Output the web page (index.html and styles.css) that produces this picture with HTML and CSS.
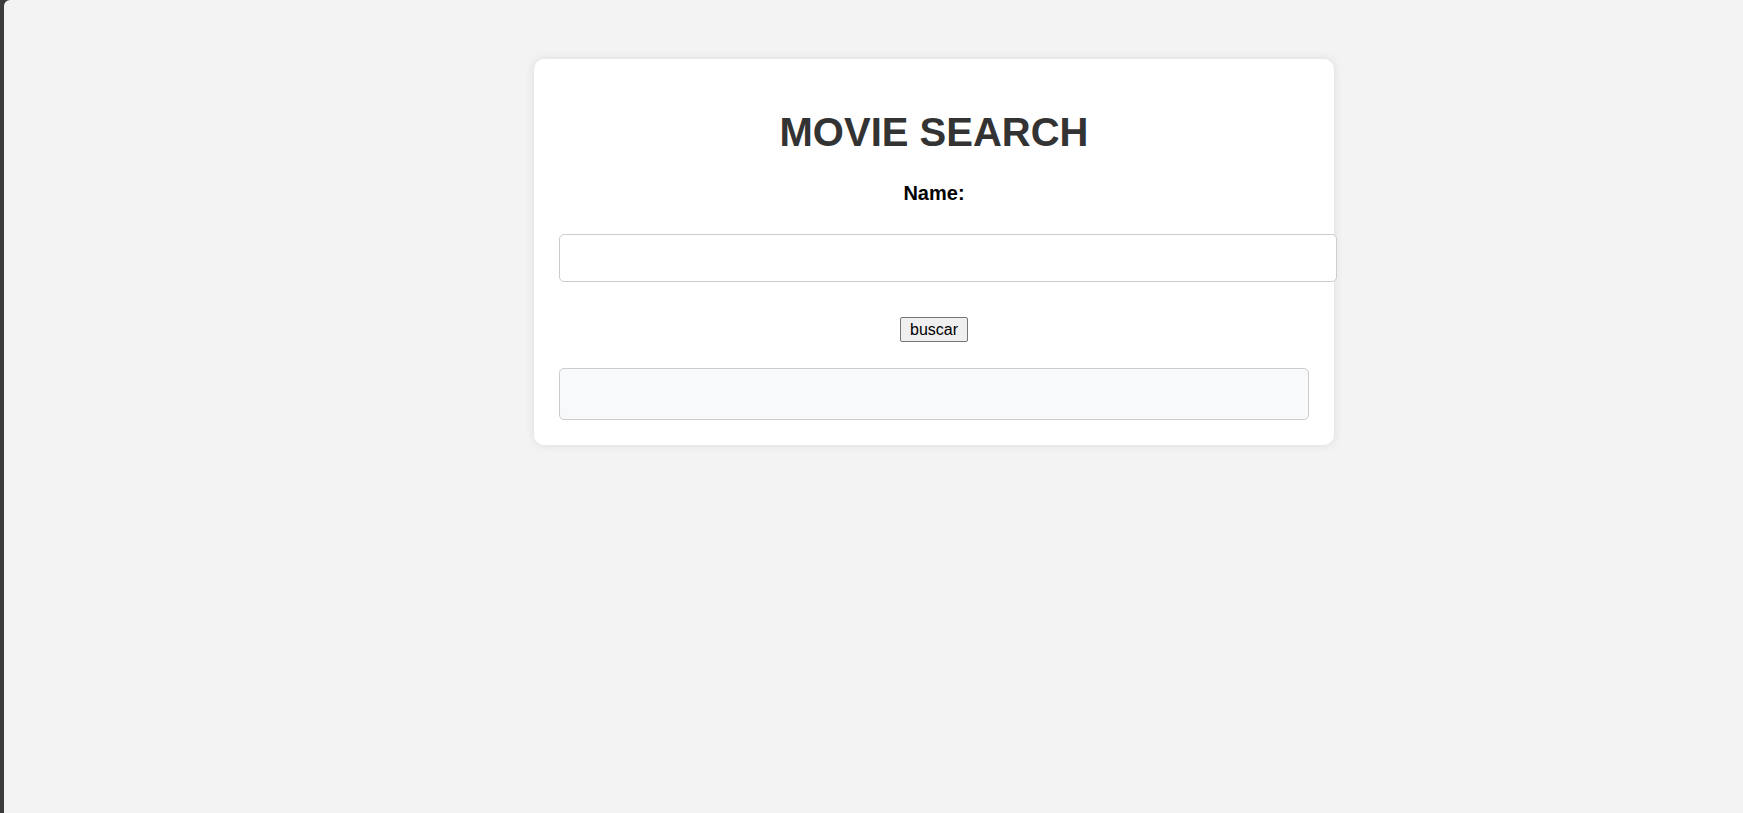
FILE: index.html
```html
<!DOCTYPE html>
<html lang="es">
<head>
<meta charset="utf-8">
<title>Movie Search</title>
<link rel="stylesheet" href="styles.css">
</head>
<body>
  <main class="page">
    <section class="card">
      <h1 class="title">MOVIE SEARCH</h1>
      <label class="label" for="name">Name:</label>
      <input class="field" id="name" type="text">
      <div class="actions">
        <button class="btn" type="button">buscar</button>
      </div>
      <div class="result"></div>
    </section>
  </main>
</body>
</html>
```
FILE: styles.css
```css
html {
  margin: 0;
  background: #3b3b3b;
  height: 100%;
}

body {
  margin: 0 0 0 4px;
  min-height: 100%;
  background: #f3f3f3;
  border-top-left-radius: 6px;
  font-family: "Liberation Sans", Arial, sans-serif;
}

.page {
  padding: 59px 0 0 530px;
}

.card {
  box-sizing: border-box;
  width: 800px;
  padding: 25px;
  background: #ffffff;
  border-radius: 10px;
  box-shadow: 0 0 10px rgba(0, 0, 0, 0.1);
}

.title {
  margin: 26px 0 27px;
  font-size: 40px;
  line-height: 45px;
  font-weight: bold;
  color: #333333;
  text-align: center;
}

.label {
  display: block;
  font-size: 20px;
  line-height: 23px;
  font-weight: bold;
  color: #000000;
  text-align: center;
}

.field {
  display: block;
  width: 100%;
  margin: 29px 0 0;
  padding: 14px 13px;
  font-family: "Liberation Sans", Arial, sans-serif;
  font-size: 16px;
  line-height: 18px;
  border: 1px solid #cccccc;
  border-radius: 5px;
  background: #ffffff;
  outline: none;
}

.actions {
  margin-top: 35px;
  text-align: center;
  line-height: 0;
}

.btn {
  box-sizing: border-box;
  height: 25px;
  padding: 2px 9px;
  font-family: "Liberation Sans", Arial, sans-serif;
  font-size: 16px;
  line-height: 19px;
  color: #000000;
  background: #efefef;
  border: 1px solid #767676;
  border-radius: 2px;
}

.result {
  box-sizing: border-box;
  height: 52px;
  margin-top: 26px;
  background: #f8f9fa;
  border: 1px solid #cccccc;
  border-radius: 5px;
}
```
